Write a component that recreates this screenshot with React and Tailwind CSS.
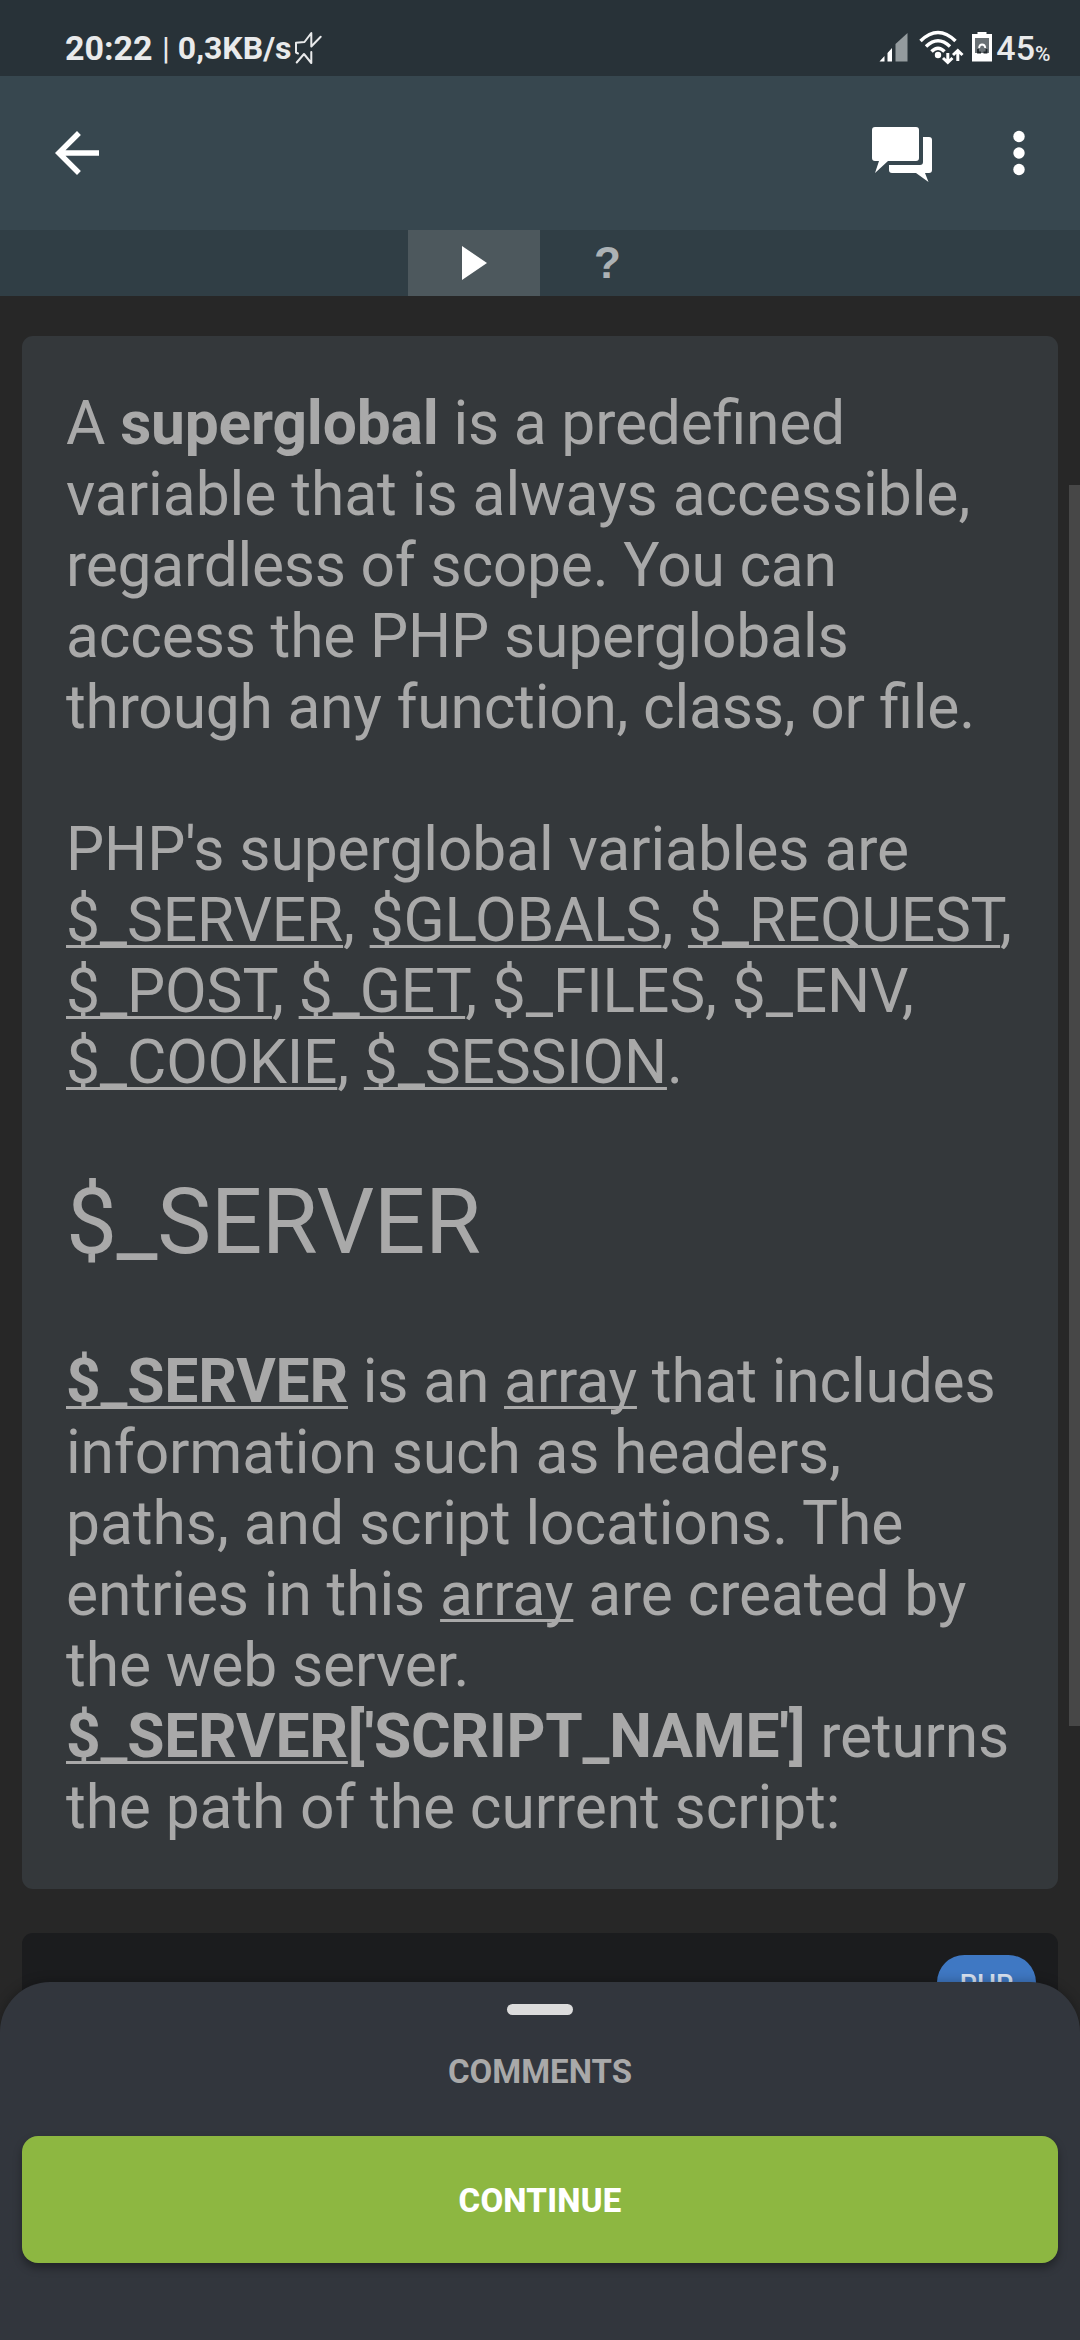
const U = ({ children }) => <span className="underline [text-decoration-skip-ink:none] decoration-[3px] underline-offset-[4px]">{children}</span>;

const L = ({ t, children }) => <span className={`block ${t}`}>{children}</span>;

function StatusBar() {
  return (
    <div className="flex h-[76px] bg-[#283238] text-[#e9eaeb] font-bold whitespace-nowrap">
      <div className="w-[99px] pl-[65px] pt-[28px] text-[34px] leading-[40px]">20:22</div>
      <div className="w-[191px] pl-[63px] pt-[29px] text-[32px] leading-[38px]"><span className="font-normal">|</span> 0,3KB/s</div>
      <svg className="h-[76px] w-[40px]" viewBox="289 0 40 76" fill="none" stroke="#e9eaeb" strokeWidth="2" strokeLinejoin="round" strokeLinecap="round">
        <path d="M297 53.500L295 52.500V42.700L303.500 42L310.300 33V46.500L319.700 36.700M295.700 62.500L303 54L310.300 63V52" />
      </svg>
      <div className="grow" />
      <svg className="h-[76px] w-[117px] shrink-0" viewBox="879.5 0 117 76" fill="#fff">
        <path d="M880 61.5L885 56V61.5ZM888 61.5V53L892.5 48V61.5Z" />
        <path d="M896 61.5V44L908 33V61.5Z" fill="#949b9e" />
        <g fill="none" stroke="#fff" strokeWidth="3.5">
          <path d="M921 41Q938.500 24 956 41M926.500 46.500Q938.500 35 950.500 46.500M932 51.500Q938.500 45 945 51.500" />
        </g>
        <circle cx="938.500" cy="55" r="3.200" />
        <path d="M948.300 53V62M943.500 58L948.300 62.500L953 58M958.300 61V51M953.500 55L958.300 50.500L963 55" fill="none" stroke="#fff" strokeWidth="3" />
        <path d="M978 32H987V34H992.500V61.500H972.500V34H978Z" />
        <path d="M975.500 38H989.500V53H975.500Z" fill="#697074" />
        <path d="M979.500 48Q980 44.500 982.500 44.500Q985.500 44.500 985.800 48" fill="none" stroke="#fff" strokeWidth="1.800" />
        <path d="M978.500 49V52.500H981.500M984 52.500H987V49" fill="none" stroke="#20272b" strokeWidth="1.800" />
      </svg>
      <div className="pt-[28px] text-[34px] leading-[40px] font-medium">45</div>
      <div className="w-[45px] pt-[42px] text-[21px] leading-[24px] font-medium">%</div>
    </div>
  );
}

function Toolbar() {
  return (
    <header className="flex h-[154px] items-center justify-between bg-[#37474f]">
      <svg className="ml-[44px] h-[66px] w-[66px]" viewBox="0 0 24 24" fill="#fff"><path d="M20 11H7.830l5.590-5.590L12 4l-8 8 8 8 1.410-1.410L7.830 13H20v-2z" /></svg>
      <svg className="h-[154px] w-[208px]" viewBox="872 76 208 154" fill="#fff">
        <path d="M875 127H916Q919 127 919 130V158Q919 161 916 161H888L875 173L879 161H875Q872 161 872 158V130Q872 127 875 127Z" />
        <path d="M923 137H929Q932 137 932 140V170Q932 173 929 173H925L928.500 182L916 173H892Q889 173 889 170V165H920Q923 165 923 162Z" />
        <circle cx="1019" cy="136.500" r="5.700" /><circle cx="1019" cy="153" r="5.700" /><circle cx="1019" cy="169.500" r="5.700" />
      </svg>
    </header>
  );
}

function Tabs() {
  return (
    <nav className="flex h-[66px] justify-center bg-[#303e45]">
      <div className="flex w-[132px] items-center justify-center bg-[#4d585d]">
        <svg className="h-[34px] w-[25px]" viewBox="0 0 25 34" fill="#fff"><path d="M0 0L25 17L0 34Z" /></svg>
      </div>
      <div className="w-[132px] pl-[3px] text-center font-['Liberation_Sans'] text-[44px] leading-[66px] font-bold text-[#acb2b5]">?</div>
    </nav>
  );
}

export default function App() {
  return (
    <div className="relative flex h-[2340px] w-[1080px] flex-col overflow-hidden bg-[#272727] font-['Roboto',sans-serif]">
      <StatusBar />
      <Toolbar />
      <Tabs />
      <main className="flex flex-col gap-[44px] px-[22px] pt-[40px]">
        <article className="h-[1553px] rounded-[11px] bg-[#34383b] pt-[52px] pl-[44px] text-[60.500px] leading-[71px] whitespace-nowrap text-[#a9a9a9] [font-feature-settings:'liga']">
          <p>
            <L t="tracking-[-0.18px]">A <b>superglobal</b> is a predefined</L>
            <L t="tracking-[-0.05px]">variable that is always accessible,</L>
            <L t="tracking-[-0.24px]">regardless of scope. You can</L>
            <L t="tracking-[-0.17px]">access the PHP superglobals</L>
            <L t="tracking-[-0.22px]">through any function, class, or file.</L>
          </p>
          <p className="mt-[71px]">
            <L t="tracking-[-0.1px]">PHP's superglobal variables are</L>
            <L t="tracking-[-0.18px]"><U>$_SERVER</U>, <U>$GLOBALS</U>, <U>$_REQUEST</U>,</L>
            <L t="tracking-[-0.12px]"><U>$_POST</U>, <U>$_GET</U>, $_FILES, $_ENV,</L>
            <L t="tracking-[-0.18px]"><U>$_COOKIE</U>, <U>$_SESSION</U>.</L>
          </p>
          <h2 className="mt-[71px] text-[90.750px] leading-[106px] tracking-[-0.4px]">$_SERVER</h2>
          <p className="mt-[71px]">
            <L t="tracking-[-0.18px]"><b><U>$_SERVER</U></b> is an <U>array</U> that includes</L>
            <L t="tracking-[-0.16px]">information such as headers,</L>
            <L t="tracking-[-0.06px]">paths, and script locations. The</L>
            <L t="tracking-[-0.12px]">entries in this <U>array</U> are created by</L>
            <L t="tracking-[-0.1px]">the web server.</L>
            <L t="tracking-[-0.2px]"><b><U>$_SERVER</U>['SCRIPT_NAME']</b> returns</L>
            <L t="tracking-[-0.13px]">the path of the current script:</L>
          </p>
        </article>
        <section className="flex h-[160px] justify-end rounded-[11px] bg-[#1b1c1e] pt-[22px] pr-[22px]">
          <div className="h-[55px] w-[99px] rounded-full bg-[#3f78c3] pt-[14px] text-center text-[27px] leading-[32px] text-[#d8e2f0] font-medium">PHP</div>
        </section>
      </main>
      <div className="absolute top-[485px] right-0 h-[1241px] w-[11px] bg-[#474747]" />
      <section className="absolute bottom-0 left-0 flex h-[358px] w-full flex-col items-center rounded-t-[50px] bg-[#32363d] px-[22px] pt-[22px] shadow-[0_0_12px_rgba(0,0,0,0.3)]">
        <div className="h-[11px] w-[66px] rounded-full bg-[#dcdcdc]" />
        <div className="mt-[37px] h-[40px] text-[33px] leading-[40px] font-bold text-[#a9a9a9]">COMMENTS</div>
        <button className="mt-[44px] h-[127px] w-full rounded-[16px] bg-[#8db741] pt-[2px] text-[33px] tracking-[0.2px] font-extrabold text-white shadow-[0_5px_8px_rgba(0,0,0,0.35)]">CONTINUE</button>
      </section>
    </div>
  );
}
